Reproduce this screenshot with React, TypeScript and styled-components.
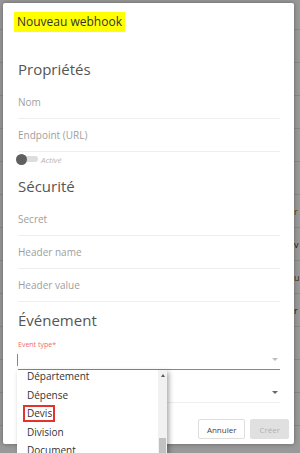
import React from "react";
import styled, { createGlobalStyle } from "styled-components";

const GlobalStyle = createGlobalStyle`
  html, body {
    margin: 0;
    padding: 0;
    width: 300px;
    height: 453px;
    overflow: hidden;
    font-family: "Open Sans", "Liberation Sans", sans-serif;
  }
  * { box-sizing: border-box; }
`;

const Screen = styled.div`
  position: relative;
  width: 300px;
  height: 453px;
  overflow: hidden;
  background: #ffffff;
`;

const PageTable = styled.div`
  display: flex;
  flex-direction: column;
  margin-top: -3px;
`;

const PageRow = styled.div`
  display: grid;
  grid-template-columns: 294px 1fr;
  align-items: center;
  height: 33px;
  border-bottom: 1px solid #e4e4e4;
  font-size: 9px;
  color: #333;
  white-space: nowrap;
`;

const PageCell = styled.span<{ $tone?: string }>`
  color: ${(p) => p.$tone || "#333"};
`;

const Overlay = styled.div`
  position: absolute;
  inset: 0;
  background: rgba(0, 0, 0, 0.4);
`;

const Dialog = styled.div`
  position: absolute;
  left: 3px;
  top: 3px;
  width: 291px;
  background: #ffffff;
  border-radius: 2px;
  box-shadow: 0 0 5px rgba(0, 0, 0, 0.35);
  display: flex;
  flex-direction: column;
`;

const TitleBar = styled.div`
  padding: 9px 11px 0;
  display: flex;
`;

const TitleText = styled.span`
  background: #ffff00;
  color: #333333;
  font-size: 12px;
  line-height: 20px;
  padding: 0 3px;
`;

const Content = styled.div`
  padding: 19px 14px 0 15px;
  display: flex;
  flex-direction: column;
`;

const SectionTitle = styled.div`
  font-size: 15px;
  line-height: 22px;
  color: #555555;
  margin: 7px 0 6px;
`;

const Field = styled.div`
  height: 33px;
  border-bottom: 1px solid #eeeeee;
  display: flex;
  align-items: center;
  font-size: 10px;
  color: #9e9e9e;
`;

const ToggleRow = styled.div`
  height: 14px;
  margin-bottom: 2px;
  display: flex;
  align-items: center;
  gap: 3px;
`;

const Track = styled.div`
  position: relative;
  width: 20px;
  height: 6px;
  border-radius: 3px;
  background: #dddddd;
`;

const Knob = styled.div`
  position: absolute;
  left: -2px;
  top: -2.5px;
  width: 11px;
  height: 11px;
  border-radius: 50%;
  background: #5f5f5f;
`;

const ToggleLabel = styled.span`
  font-size: 8px;
  font-style: italic;
  color: #b5b5b5;
`;

const SelectField = styled.div<{ $error?: boolean }>`
  position: relative;
  height: 33px;
  padding-top: 3px;
  border-bottom: 1px solid ${(p) => (p.$error ? "#ee5a60" : "#eeeeee")};
  display: flex;
  flex-direction: column;
`;

const SelectLabel = styled.div<{ $error?: boolean }>`
  height: 10px;
  line-height: 10px;
  font-size: 7px;
  color: ${(p) => (p.$error ? "#ef6b70" : "#9e9e9e")};
`;

const SelectInput = styled.div`
  flex: 1;
  display: flex;
  align-items: center;
  justify-content: space-between;
  padding-right: 2px;
`;

const Caret = styled.span`
  width: 1px;
  height: 12px;
  background: #ee5a60;
  margin-left: -1px;
`;

const Arrow = styled.span<{ $light?: boolean }>`
  margin-left: auto;
  width: 0;
  height: 0;
  border-left: 3px solid transparent;
  border-right: 3px solid transparent;
  border-top: 3px solid ${(p) => (p.$light ? "#bdbdbd" : "#666666")};
`;

const Menu = styled.div`
  position: absolute;
  left: -1px;
  top: calc(100% + 1px);
  width: 150px;
  height: 100px;
  background: #ffffff;
  box-shadow: 2px 2px 5px rgba(0, 0, 0, 0.35);
  display: flex;
  overflow: hidden;
  z-index: 2;
`;

const MenuList = styled.div`
  flex: 1;
  display: flex;
  flex-direction: column;
  margin-top: -3px;
`;

const MenuItem = styled.div`
  height: 18.5px;
  flex: none;
  display: flex;
  align-items: center;
  padding-left: 10px;
  font-size: 10px;
  color: #333333;
`;

const Marked = styled.span`
  border: 2px solid #e5322d;
  margin-left: -4px;
  padding: 0 1px 0 2px;
  line-height: 13px;
`;

const ScrollTrack = styled.div`
  width: 9px;
  background: #f1f1f1;
  display: flex;
  flex-direction: column;
  align-items: center;
`;

const ScrollUp = styled.span`
  margin-top: 4px;
  width: 0;
  height: 0;
  border-left: 2.5px solid transparent;
  border-right: 2.5px solid transparent;
  border-bottom: 3px solid #5a5a5a;
`;

const ScrollThumb = styled.span`
  margin-top: 61px;
  width: 7px;
  height: 40px;
  background: #c1c1c1;
`;

const Actions = styled.div`
  margin-top: 16px;
  padding: 0 5px 5px 0;
  display: flex;
  justify-content: flex-end;
  gap: 5px;
`;

const Button = styled.button<{ $disabled?: boolean }>`
  height: 20px;
  padding: 0 8px;
  border-radius: 2px;
  font-family: inherit;
  font-size: 8px;
  border: 1px solid ${(p) => (p.$disabled ? "#e0e0e0" : "#dedede")};
  background: ${(p) => (p.$disabled ? "#e0e0e0" : "#ffffff")};
  color: ${(p) => (p.$disabled ? "#b0b0b0" : "#444444")};
`;

const pageRows: { text: string; tone?: string }[] = [
  { text: "" },
  { text: "" },
  { text: "" },
  { text: "" },
  { text: "" },
  { text: "" },
  { text: "r", tone: "#8a7a20" },
  { text: "v" },
  { text: "u", tone: "#6a4a20" },
  { text: "r" },
  { text: "" },
  { text: "" },
  { text: "" },
  { text: "" },
];

const menuItems = ["Département", "Dépense", "Devis", "Division", "Document", "Dossier"];

export default function App() {
  return (
    <>
      <GlobalStyle />
      <Screen>
        <PageTable>
          {pageRows.map((r, i) => (
            <PageRow key={i}>
              <span />
              <PageCell $tone={r.tone}>{r.text}</PageCell>
            </PageRow>
          ))}
        </PageTable>
        <Overlay />
        <Dialog>
          <TitleBar>
            <TitleText>Nouveau webhook</TitleText>
          </TitleBar>
          <Content>
            <SectionTitle>Propriétés</SectionTitle>
            <Field>Nom</Field>
            <Field>Endpoint (URL)</Field>
            <ToggleRow>
              <Track>
                <Knob />
              </Track>
              <ToggleLabel>Activé</ToggleLabel>
            </ToggleRow>
            <SectionTitle>Sécurité</SectionTitle>
            <Field>Secret</Field>
            <Field>Header name</Field>
            <Field>Header value</Field>
            <SectionTitle>Événement</SectionTitle>
            <SelectField $error>
              <SelectLabel $error>Event type*</SelectLabel>
              <SelectInput>
                <Caret />
                <Arrow $light />
              </SelectInput>
              <Menu>
                <MenuList>
                  {menuItems.map((m) => (
                    <MenuItem key={m}>{m === "Devis" ? <Marked>{m}</Marked> : m}</MenuItem>
                  ))}
                </MenuList>
                <ScrollTrack>
                  <ScrollUp />
                  <ScrollThumb />
                </ScrollTrack>
              </Menu>
            </SelectField>
            <SelectField>
              <SelectLabel />
              <SelectInput>
                <Arrow />
              </SelectInput>
            </SelectField>
          </Content>
          <Actions>
            <Button>Annuler</Button>
            <Button $disabled>Créer</Button>
          </Actions>
        </Dialog>
      </Screen>
    </>
  );
}
